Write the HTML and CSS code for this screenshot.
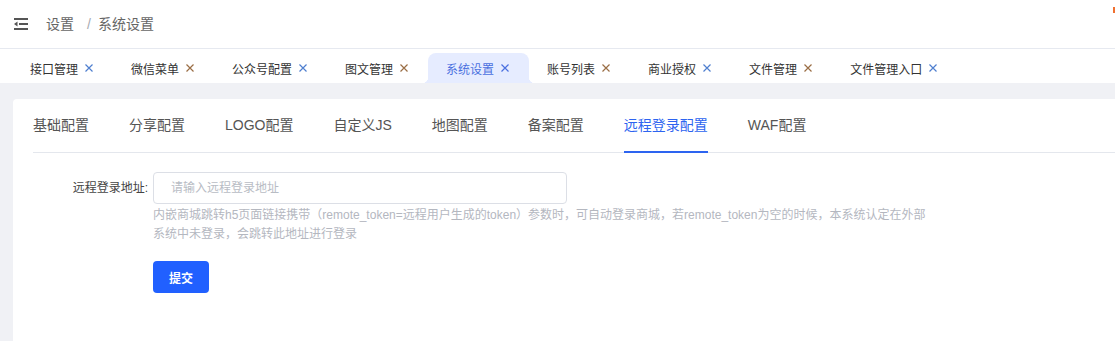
FILE: index.html
```html
<!DOCTYPE html>
<html lang="zh-CN">
<head>
<meta charset="utf-8">
<link rel="stylesheet" href="styles.css">
</head>
<body>
<div class="header">
  <svg class="menu-icon" width="14" height="12" viewBox="0 0 14 12">
    <rect x="0" y="0" width="14" height="2" fill="#555"/>
    <rect x="5" y="5" width="9" height="2" fill="#555"/>
    <path d="M0 6 L3.5 3.5 L3.5 8.5 Z" fill="#555"/>
    <rect x="0" y="10" width="14" height="2" fill="#555"/>
  </svg>
  <div class="crumbs"><span>设置</span><span class="sep">/</span><span>系统设置</span></div>
  <span class="corner"></span>
</div>
<div class="tabs">
  <div class="tab"><span>接口管理</span><svg class="x xa" viewBox="0 0 8 8"><path d="M0.5 0.5 L7.5 7.5 M7.5 0.5 L0.5 7.5"/></svg></div>
  <div class="tab"><span>微信菜单</span><svg class="x xb" viewBox="0 0 8 8"><path d="M0.5 0.5 L7.5 7.5 M7.5 0.5 L0.5 7.5"/></svg></div>
  <div class="tab"><span>公众号配置</span><svg class="x xa" viewBox="0 0 8 8"><path d="M0.5 0.5 L7.5 7.5 M7.5 0.5 L0.5 7.5"/></svg></div>
  <div class="tab"><span>图文管理</span><svg class="x xb" viewBox="0 0 8 8"><path d="M0.5 0.5 L7.5 7.5 M7.5 0.5 L0.5 7.5"/></svg></div>
  <div class="tab active"><span>系统设置</span><svg class="x" viewBox="0 0 8 8"><path d="M0.5 0.5 L7.5 7.5 M7.5 0.5 L0.5 7.5"/></svg></div>
  <div class="tab"><span>账号列表</span><svg class="x xb" viewBox="0 0 8 8"><path d="M0.5 0.5 L7.5 7.5 M7.5 0.5 L0.5 7.5"/></svg></div>
  <div class="tab"><span>商业授权</span><svg class="x xa" viewBox="0 0 8 8"><path d="M0.5 0.5 L7.5 7.5 M7.5 0.5 L0.5 7.5"/></svg></div>
  <div class="tab"><span>文件管理</span><svg class="x xb" viewBox="0 0 8 8"><path d="M0.5 0.5 L7.5 7.5 M7.5 0.5 L0.5 7.5"/></svg></div>
  <div class="tab"><span>文件管理入口</span><svg class="x xa" viewBox="0 0 8 8"><path d="M0.5 0.5 L7.5 7.5 M7.5 0.5 L0.5 7.5"/></svg></div>
</div>
<div class="main">
  <div class="card">
    <div class="subtabs">
      <div class="subtab">基础配置</div>
      <div class="subtab">分享配置</div>
      <div class="subtab">LOGO配置</div>
      <div class="subtab">自定义JS</div>
      <div class="subtab">地图配置</div>
      <div class="subtab">备案配置</div>
      <div class="subtab on">远程登录配置</div>
      <div class="subtab">WAF配置</div>
    </div>
    <div class="form">
      <div class="row">
        <label class="label">远程登录地址:</label>
        <div class="field">
          <div class="input">请输入远程登录地址</div>
          <div class="help">内嵌商城跳转h5页面链接携带（remote_token=远程用户生成的token）参数时，可自动登录商城，若remote_token为空的时候，本系统认定在外部系统中未登录，会跳转此地址进行登录</div>
          <button class="btn">提交</button>
        </div>
      </div>
    </div>
  </div>
</div>
</body>
</html>
```

FILE: styles.css
```css
* { box-sizing: border-box; }
html, body { margin: 0; height: 100%; }
body {
  font-family: "Liberation Sans", "Noto Sans CJK SC", sans-serif;
  background: #f0f1f5;
  overflow: hidden;
}
.header {
  height: 49px;
  background: #fff;
  border-bottom: 1px solid #e6e9f0;
  display: flex;
  align-items: center;
  padding-left: 14px;
  position: relative;
}
.crumbs {
  margin-left: 18px;
  font-size: 14px;
  color: #666;
  line-height: 20px;
}
.crumbs .sep { margin: 0 7px 0 13px; color: #a8abb2; }
.corner {
  position: absolute;
  right: 0;
  top: 7px;
  width: 2px;
  height: 6px;
  background: #f07030;
}
.tabs {
  height: 34px;
  background: #fff;
  display: flex;
  align-items: flex-end;
  padding-left: 12px;
}
.tab {
  height: 30px;
  padding: 0 18px;
  display: flex;
  align-items: center;
  gap: 7px;
  font-size: 12px;
  color: #333;
  position: relative;
}
.tab .x {
  width: 8px;
  height: 8px;
  margin-right: 2px;
  fill: none;
  stroke: #6b7c99;
  stroke-width: 1.2;
}
.tab .xa { stroke: #4f7fcf; }
.tab .xb { stroke: #9a6e45; }
.tab.active {
  background: #e6ecff;
  color: #4a70e0;
  border-radius: 8px 8px 0 0;
}
.tab.active .x { stroke: #4a70e0; }
.tab.active::before,
.tab.active::after {
  content: "";
  position: absolute;
  bottom: 0;
  width: 6px;
  height: 6px;
}
.tab.active::before {
  left: -6px;
  background: radial-gradient(circle at 0 0, transparent 6px, #e6ecff 6.5px);
}
.tab.active::after {
  right: -6px;
  background: radial-gradient(circle at 100% 0, transparent 6px, #e6ecff 6.5px);
}
.main {
  padding: 16px 0 0 13px;
  height: calc(100% - 83px);
}
.card {
  background: #fff;
  border-radius: 4px 0 0 0;
  height: 100%;
  padding-left: 20px;
}
.subtabs {
  display: flex;
  border-bottom: 1px solid #e4e7ed;
  height: 54px;
}
.subtab {
  padding: 0 20px;
  height: 53px;
  line-height: 53px;
  font-size: 14px;
  color: #555;
  position: relative;
}
.subtab:first-child { padding-left: 0; }
.subtab.on { color: #2d64f0; }
.subtab.on::after {
  content: "";
  position: absolute;
  left: 20px;
  right: 20px;
  bottom: -1px;
  height: 2px;
  background: #2d64f0;
}
.form { padding-top: 19px; }
.row { display: flex; }
.label {
  width: 115px;
  margin-right: 5px;
  text-align: right;
  font-size: 12px;
  color: #444;
  line-height: 32px;
}
.input {
  width: 414px;
  height: 32px;
  border: 1px solid #dcdfe6;
  border-radius: 4px;
  font-size: 12px;
  color: #b8bcc4;
  line-height: 30px;
  padding-left: 17px;
}
.help {
  width: 784px;
  margin-top: 2px;
  font-size: 12px;
  line-height: 19px;
  color: #b4b7bf;
}
.btn {
  margin-top: 17px;
  width: 56px;
  height: 32px;
  border: 0;
  border-radius: 4px;
  background: #2160ff;
  color: #fff;
  font-family: inherit;
  font-size: 12px;
  font-weight: bold;
  padding: 0;
}
```
